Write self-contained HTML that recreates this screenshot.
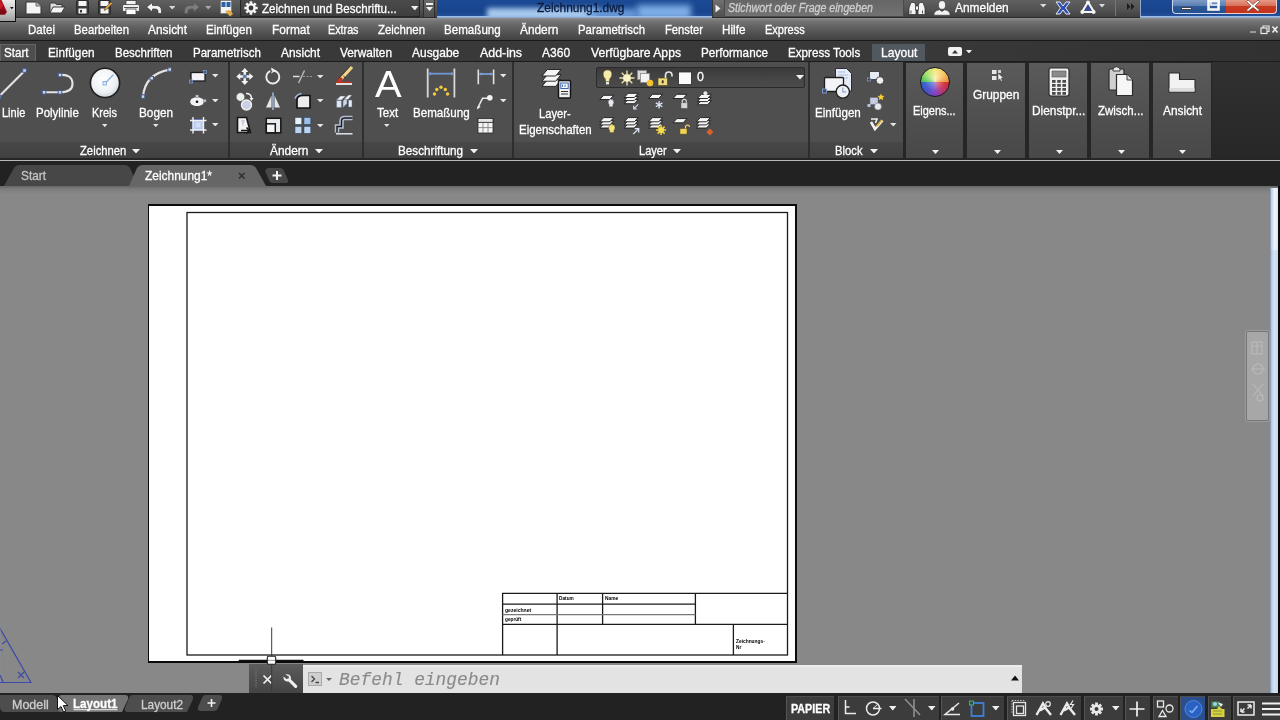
<!DOCTYPE html>
<html lang="de"><head><meta charset="utf-8"><title>Zeichnung1.dwg</title>
<style>
html,body{margin:0;padding:0;}
body{width:1280px;height:720px;overflow:hidden;position:relative;background:#888;font-family:'Liberation Sans', sans-serif;}
#app{position:absolute;left:0;top:0;width:1280px;height:720px;overflow:hidden;}
#app div,#app svg,#app span{position:absolute;}
.t{white-space:pre;transform-origin:0 50%;}
</style></head><body><div id="app">
<div style="left:0px;top:186px;width:1280px;height:508px;background:#888888;"></div>
<div style="left:0px;top:186px;width:1280px;height:8px;background:linear-gradient(#666,#7b7b7b 35%,#888);"></div>
<div style="left:1270px;top:188px;width:8px;height:505px;background:linear-gradient(90deg,#7d8fa6,#b9cfe8 22%,#d6e4f2 55%,#c2d6ec);"></div>
<div style="left:1271px;top:188px;width:7px;height:62px;background:linear-gradient(90deg,#b5cce6,#eef4fa 50%,#dbe7f4);"></div>
<div style="left:1278px;top:186px;width:2px;height:507px;background:#0a0a0a;"></div>
<div style="left:1245px;top:330px;width:25px;height:92px;background:#9a9a9a;border-radius:3px;"></div>
<div style="left:1246px;top:331px;width:23px;height:90px;background:#a7a7a7;border:1px solid #767676;box-sizing:border-box;border-radius:2px;"></div>
<svg style="left:1249px;top:336px" width="18" height="80" viewBox="0 0 18 80"><g fill="none" stroke="#bababa" stroke-width="1.1"><rect x="3" y="6" width="10" height="12"/><path d="M3 10h10M8 6v12"/><circle cx="9" cy="33" r="5"/><path d="M2 33h14"/><path d="M4 48l10 12M14 48L4 60"/><circle cx="11" cy="62" r="3"/></g></svg>
<div style="left:148px;top:204px;width:649px;height:459px;background:#ffffff;border:2px solid #0a0a0a;border-left-width:1.6px;box-sizing:border-box;"></div>
<svg style="left:0px;top:0px" width="1280" height="720" viewBox="0 0 1280 720"><g fill="none" stroke="#1a1a1a" stroke-width="1.3"><rect x="187" y="212.5" width="600.5" height="442.5"/><path d="M502.6 655V593.3H787.5"/><path d="M557.1 593.3V655M602.6 593.3V624.3M695.4 593.3V624.3M733.4 624.3V655M502.6 624.3H787.5M502.6 604.2H695.4"/></g><path d="M502.6 614.6H695.4" stroke="#777" stroke-width="1.2" fill="none"/></svg>
<svg style="left:0px;top:620px" width="40" height="70" viewBox="0 0 40 70"><g fill="none" stroke="#3d4ba8" stroke-width="1.2"><path d="M-2 5L31 62.5H-2"/><path d="M-2 62.5" /><path d="M0 8L0 62" stroke="#8a8f9e" stroke-width="0.8"/><path d="M2 24l4-3M0 30l3 0M18 52l6 6M24 52l-6 6M0 55l3 7"/></g></svg>
<div style="left:249px;top:664px;width:54px;height:29px;background:linear-gradient(#5c5c5c,#444);"></div>
<div style="left:303px;top:665px;width:719px;height:28px;background:#e3e3e3;"></div>
<div style="left:303px;top:665px;width:719px;height:2px;background:#ededed;"></div>
<svg style="left:252px;top:668px" width="10" height="22" viewBox="0 0 10 22"><path d="M4 2v18" stroke="#8a8a8a" stroke-width="1" stroke-dasharray="1 1.5"/></svg>
<svg style="left:262px;top:674px" width="11" height="11" viewBox="0 0 11 11"><path d="M1.5 1.5l8 8M9.5 1.5l-8 8" stroke="#f4f4f4" stroke-width="1.7" fill="none"/></svg>
<svg style="left:283px;top:672px" width="16" height="16" viewBox="0 0 16 16"><path d="M2.2 2.6a4 4 0 0 1 5.6 4.6l6 6a1.3 1.3 0 0 1-2.2 2.2l-6-6A4 4 0 0 1 .6 4.6L3.4 7 5.6 6.6 6 4.4Z" fill="#f0f0f0"/></svg>
<div style="left:308px;top:672px;width:14px;height:14px;background:#cfcfcf;border:1px solid #aaa;box-sizing:border-box;"></div>
<svg style="left:308px;top:672px" width="14" height="14" viewBox="0 0 14 14"><path d="M3.5 4l3 3-3 3M7.5 10.5h3.5" stroke="#444" stroke-width="1.3" fill="none"/></svg>
<svg style="left:325.5px;top:678.0px" width="6" height="3" viewBox="0 0 6 3"><path d="M0 0H6L3.0 3Z" fill="#666"/></svg>
<svg style="left:1011px;top:675px" width="8" height="6" viewBox="0 0 8 6"><path d="M0 5.5H8L4 0.5Z" fill="#111"/></svg>
<svg style="left:230px;top:620px" width="90" height="80" viewBox="0 0 90 80"><path d="M41.700 7.500V36M41.700 44V71" stroke="#3a3a3a" stroke-width="1" fill="none"/><path d="M8.700 40.400H73.500" stroke="#111" stroke-width="1.300" fill="none"/><rect x="37.300" y="36.300" width="8.400" height="8" rx="1.200" fill="#fff" stroke="#222" stroke-width="1.100"/><path d="M38 40.400H45" stroke="#888" stroke-width=".8"/></svg>
<div style="left:0px;top:693px;width:1280px;height:27px;background:#222222;"></div>
<div style="left:786px;top:696px;width:48px;height:24px;background:#3c3c3c;border-left:1px solid #555;border-top:1px solid #4c4c4c;box-sizing:border-box;"></div>
<div style="left:838px;top:696px;width:101px;height:24px;background:#3c3c3c;border-left:1px solid #555;border-top:1px solid #4c4c4c;box-sizing:border-box;"></div>
<div style="left:941px;top:696px;width:63px;height:24px;background:#3c3c3c;border-left:1px solid #555;border-top:1px solid #4c4c4c;box-sizing:border-box;"></div>
<div style="left:1007px;top:696px;width:74px;height:24px;background:#3c3c3c;border-left:1px solid #555;border-top:1px solid #4c4c4c;box-sizing:border-box;"></div>
<div style="left:1084px;top:696px;width:39px;height:24px;background:#3c3c3c;border-left:1px solid #555;border-top:1px solid #4c4c4c;box-sizing:border-box;"></div>
<div style="left:1125px;top:696px;width:25px;height:24px;background:#3c3c3c;border-left:1px solid #555;border-top:1px solid #4c4c4c;box-sizing:border-box;"></div>
<div style="left:1153px;top:696px;width:25px;height:24px;background:#3c3c3c;border-left:1px solid #555;border-top:1px solid #4c4c4c;box-sizing:border-box;"></div>
<div style="left:1180px;top:696px;width:25px;height:24px;background:#3c3c3c;border-left:1px solid #555;border-top:1px solid #4c4c4c;box-sizing:border-box;"></div>
<div style="left:1208px;top:696px;width:23px;height:24px;background:#3c3c3c;border-left:1px solid #555;border-top:1px solid #4c4c4c;box-sizing:border-box;"></div>
<div style="left:1233px;top:696px;width:47px;height:24px;background:#3c3c3c;border-left:1px solid #555;border-top:1px solid #4c4c4c;box-sizing:border-box;"></div>
<svg style="left:0px;top:694px" width="230" height="20" viewBox="0 0 230 20"><path d="M0 1H52Q56 1 57 5L60 18H4Q1 18 0 14Z" fill="#4d4d4d"/><path d="M132 1H190Q194 1 193 5L187 18H128Q124 18 125 14L129 4Q130 1 132 1Z" fill="#4d4d4d"/><path d="M62 1H125Q129 1 128 5L122 18H62Q58 18 58 14V5Q58 1 62 1Z" fill="#747474"/><path d="M206 1H219Q223 1 222 5L218 14Q217 17 213 17H201Q197 17 198 13L202 4Q203 1 206 1Z" fill="#4d4d4d"/><path d="M211.5 5v8M207.5 9h8" stroke="#f2f2f2" stroke-width="1.6"/><path d="M73.500 15.700H117.500" stroke="#ededed" stroke-width="1"/></svg>
<svg style="left:840px;top:696px" width="150" height="24" viewBox="0 0 150 24"><path d="M5.500 4V17.500H16M5.500 11H9.500" stroke="#eaeaea" stroke-width="1.500" fill="none"/><circle cx="33" cy="12.500" r="6.500" fill="none" stroke="#eaeaea" stroke-width="1.500"/><path d="M33 12.500H41.500" stroke="#eaeaea" stroke-width="1.500"/><path d="M33 12.500L38 8" stroke="#eaeaea" stroke-width="1"/><path d="M65 3L80 19M74 3V21" stroke="#8e8e8e" stroke-width="1.600" fill="none"/><path d="M120 18.500H105L119 7" stroke="#eaeaea" stroke-width="1.500" fill="none"/><circle cx="112.500" cy="13" r="1.800" fill="#eaeaea"/><rect x="131.500" y="7" width="12" height="13" fill="none" stroke="#3f7fdc" stroke-width="1.800"/><rect x="129.500" y="5" width="4" height="4" fill="#1e5a3c" stroke="#58c088" stroke-width=".8"/></svg>
<svg style="left:888.5px;top:706.2px" width="7.5" height="4.5" viewBox="0 0 7.5 4.5"><path d="M0 0H7.5L3.75 4.5Z" fill="#f0f0f0"/></svg>
<svg style="left:928.0px;top:706.2px" width="7.5" height="4.5" viewBox="0 0 7.5 4.5"><path d="M0 0H7.5L3.75 4.5Z" fill="#f0f0f0"/></svg>
<svg style="left:992.2px;top:706.2px" width="7.5" height="4.5" viewBox="0 0 7.5 4.5"><path d="M0 0H7.5L3.75 4.5Z" fill="#f0f0f0"/></svg>
<svg style="left:1112.2px;top:706.2px" width="7.5" height="4.5" viewBox="0 0 7.5 4.5"><path d="M0 0H7.5L3.75 4.5Z" fill="#f0f0f0"/></svg>
<svg style="left:1008px;top:696px" width="272" height="24" viewBox="0 0 272 24"><rect x="5.500" y="6.500" width="12" height="13" fill="none" stroke="#e6e6e6" stroke-width="1.300"/><rect x="8.500" y="10" width="7" height="7.500" fill="none" stroke="#e6e6e6" stroke-width="1.300"/><path d="M4 4.500H17.500M4 4.500V18" stroke="#bdbdbd" stroke-width="1" stroke-dasharray="1.500 1.200" fill="none"/><path d="M28.5 19L35.0 7.500L38.5 13.500M32.0 14.500L37.0 11.500M37.0 11.500L43.0 19" stroke="#ececec" stroke-width="2.400" fill="none"/><circle cx="40" cy="8" r="2.300" fill="none" stroke="#ececec" stroke-width="1.200"/><path d="M52.5 19L59.0 7.500L62.5 13.500M56.0 14.500L61.0 11.500M61.0 11.500L67.0 19" stroke="#ececec" stroke-width="2.400" fill="none"/><path d="M65 4.500l-2.500 4h3l-2.500 4" stroke="#ececec" stroke-width="1.200" fill="none"/><g transform="translate(88.500,13)"><g stroke="#e8e8e8" stroke-width="2.800"><path d="M0 -6.500V6.500M-6.500 0H6.500M-4.600 -4.600L4.600 4.600M4.600 -4.600L-4.600 4.600"/></g><circle r="4.600" fill="#e8e8e8"/><circle r="2" fill="#3c3c3c"/></g><path d="M129 5.500V20.500M121.500 13H136.500" stroke="#f0f0f0" stroke-width="1.700"/><rect x="149.500" y="5" width="6" height="6" fill="none" stroke="#eaeaea" stroke-width="1.300"/><circle cx="161.500" cy="12.500" r="3.500" fill="none" stroke="#eaeaea" stroke-width="1.300"/><path d="M151 20.500l3.500-6 3.500 6Z" fill="none" stroke="#eaeaea" stroke-width="1.300"/><rect x="173" y="1" width="24" height="23" fill="#2a4f8c"/><circle cx="185.500" cy="13" r="8.500" fill="#2a62c4" stroke="#4f86e0" stroke-width="1"/><path d="M181.500 14.500L184 16.500L189.500 10" stroke="#7fb0f4" stroke-width="1.600" fill="none"/><rect x="203.500" y="5.500" width="8" height="6" fill="#4c8a5c"/><path d="M203 13h6l2-3 3 3h2.500v8H203Z" fill="#d8d040"/><circle cx="207" cy="8" r="2" fill="#9fd0f0"/><path d="M210 6.500l5 1.500-2 3Z" fill="#f2f2f2"/><path d="M205 15h9M205 18h9" stroke="#7c9a3c" stroke-width="1"/><rect x="230" y="6" width="16" height="13" fill="none" stroke="#ececec" stroke-width="1.500"/><path d="M233 16l3.500-3.500M233 16v-3.500M233 16h3.500M243 9l-3.500 3.500M243 9v3.500M243 9h-3.500" stroke="#ececec" stroke-width="1.500" fill="none"/><path d="M254 7.500H272M254 13H272M254 18.500H272" stroke="#f0f0f0" stroke-width="2"/></svg>
<div style="left:0px;top:0px;width:1280px;height:18px;background:linear-gradient(#606060,#525252 55%,#3e3e3e);"></div>
<div style="left:0px;top:17px;width:1280px;height:1px;background:#2c2c2c;"></div>
<div style="left:0px;top:18px;width:1280px;height:23px;background:linear-gradient(#8e8e8e,#767676 12%,#646464 35%,#525252 65%,#404040);"></div>
<div style="left:0px;top:40px;width:1280px;height:1px;background:#191919;"></div>
<div style="left:0px;top:41px;width:1280px;height:21px;background:linear-gradient(90deg,#393939 70%,#313131);"></div>
<div style="left:0px;top:44px;width:36px;height:17px;background:#4e4e4e;border:1px solid #656565;border-bottom:none;box-sizing:border-box;"></div>
<div style="left:872px;top:44px;width:53px;height:17px;background:#525860;"></div>
<div style="left:0px;top:61px;width:1280px;height:1px;background:#1c1c1c;"></div>
<div style="left:948px;top:47px;width:14px;height:9px;background:#f2f2f2;border-radius:2px;"></div>
<svg style="left:948px;top:47px" width="14" height="9" viewBox="0 0 14 9"><path d="M4 6.5h6L7 3Z" fill="#333"/></svg>
<svg style="left:966.0px;top:49.8px" width="6" height="3.5" viewBox="0 0 6 3.5"><path d="M0 0H6L3.0 3.5Z" fill="#f0f0f0"/></svg>
<div style="left:0px;top:62px;width:1280px;height:97px;background:#262626;"></div>
<div style="left:1212px;top:62px;width:68px;height:96px;background:linear-gradient(#313131,#272727);"></div>
<div style="left:0px;top:62px;width:228px;height:96px;background:#4f4f4f;"></div>
<div style="left:0px;top:142px;width:228px;height:16px;background:linear-gradient(#474747,#414141);"></div>
<div style="left:229.5px;top:62px;width:132.5px;height:96px;background:#4f4f4f;"></div>
<div style="left:229.5px;top:142px;width:132.5px;height:16px;background:linear-gradient(#474747,#414141);"></div>
<div style="left:363.5px;top:62px;width:148.5px;height:96px;background:#4f4f4f;"></div>
<div style="left:363.5px;top:142px;width:148.5px;height:16px;background:linear-gradient(#474747,#414141);"></div>
<div style="left:513.5px;top:62px;width:294.5px;height:96px;background:#4f4f4f;"></div>
<div style="left:513.5px;top:142px;width:294.5px;height:16px;background:linear-gradient(#474747,#414141);"></div>
<div style="left:809.5px;top:62px;width:93.5px;height:96px;background:#4f4f4f;"></div>
<div style="left:809.5px;top:142px;width:93.5px;height:16px;background:linear-gradient(#474747,#414141);"></div>
<div style="left:228px;top:62px;width:1.5px;height:96px;background:#2e2e2e;"></div>
<div style="left:362px;top:62px;width:1.5px;height:96px;background:#2e2e2e;"></div>
<div style="left:512px;top:62px;width:1.5px;height:96px;background:#2e2e2e;"></div>
<div style="left:808px;top:62px;width:1.5px;height:96px;background:#2e2e2e;"></div>
<div style="left:906px;top:63px;width:57px;height:95px;background:linear-gradient(#5a5a5a,#515151 50%,#484848);"></div>
<div style="left:967px;top:63px;width:58px;height:95px;background:linear-gradient(#5a5a5a,#515151 50%,#484848);"></div>
<div style="left:1029px;top:63px;width:58px;height:95px;background:linear-gradient(#5a5a5a,#515151 50%,#484848);"></div>
<div style="left:1091px;top:63px;width:58px;height:95px;background:linear-gradient(#5a5a5a,#515151 50%,#484848);"></div>
<div style="left:1153px;top:63px;width:58px;height:95px;background:linear-gradient(#5a5a5a,#515151 50%,#484848);"></div>
<div style="left:0px;top:158px;width:1280px;height:2px;background:#262626;"></div>
<div style="left:0px;top:160px;width:1280px;height:1px;background:#b8b8b8;"></div>
<div style="left:0px;top:161px;width:1280px;height:25px;background:#222222;"></div>
<svg style="left:0px;top:164px" width="300" height="23" viewBox="0 0 300 23"><path d="M4 22L14 4Q16 1 20 1H124Q128 1 130 4L138 22Z" fill="#474747"/><path d="M129 22L137 4Q139 1 143 1H250Q254 1 256 4L266 22Z" fill="#666"/><path d="M265 7Q266 4 269 4H280Q283 4 284 7L288 16Q289 19 286 19H273Q270 19 269 16Z" fill="#474747"/><path d="M277 7v9M272.500 11.500h9" stroke="#f2f2f2" stroke-width="2"/><path d="M239 9l5.500 5.500M244.500 9l-5.500 5.500" stroke="#303030" stroke-width="1.600"/></svg>
<div style="left:0px;top:0px;width:16px;height:22px;background:linear-gradient(#ececec,#cfcfcf 45%,#9d9d9d);border-right:1px solid #0c0c0c;border-bottom:1px solid #0c0c0c;box-sizing:border-box;"></div>
<svg style="left:0px;top:0px" width="15" height="21" viewBox="0 0 15 21"><path d="M0 0H1.500L7 12 5 14.5H0Z" fill="#a30e1b"/><path d="M0 0L3 6 0 9Z" fill="#c81c28"/><path d="M0 10L4 9 6 12.500 4.500 14.500H0Z" fill="#7c0a14"/><path d="M10 7h3.600l-1.800 2.300Z" fill="#111"/></svg>
<svg style="left:25px;top:0.5px" width="17" height="14" viewBox="0 0 17 14"><path d="M1 1H11L16 5V13H1Z" fill="#f4f4f4" stroke="#333" stroke-width="1"/><path d="M11 1V5H16" fill="#bbb" stroke="#555" stroke-width=".8"/></svg>
<svg style="left:49px;top:1px" width="17" height="14" viewBox="0 0 17 14"><path d="M1 12V3Q1 2 2 2H6L7.500 3.500H13V6" fill="#ddd" stroke="#3a3a3a" stroke-width="1"/><path d="M1 12L4 6H16L12.500 12Z" fill="#f4f4f4" stroke="#3a3a3a" stroke-width="1"/></svg>
<svg style="left:76px;top:0px" width="13" height="15" viewBox="0 0 13 15"><rect x=".5" y=".5" width="12" height="14" rx="1" fill="#3a3a3a" stroke="#2a2a2a"/><rect x="2.500" y="1" width="8" height="5" fill="#f4f4f4"/><rect x="2.500" y="8.500" width="8" height="5" fill="#f4f4f4"/><rect x="4" y="10" width="2" height="2.500" fill="#333"/></svg>
<svg style="left:98px;top:0px" width="15" height="15" viewBox="0 0 15 15"><rect x=".5" y=".5" width="12" height="14" rx="1" fill="#3a3a3a" stroke="#2a2a2a"/><rect x="2.500" y="1" width="8" height="5" fill="#f4f4f4"/><rect x="2.500" y="8.500" width="8" height="5" fill="#f4f4f4"/><path d="M7 8l6-6 1.500 1.500-6 6-2.500 1Z" fill="#e8a33a" stroke="#444" stroke-width=".6"/></svg>
<svg style="left:122px;top:0px" width="18" height="15" viewBox="0 0 18 15"><rect x="4" y=".5" width="10" height="5" fill="#f4f4f4" stroke="#444" stroke-width=".8"/><rect x=".5" y="4.500" width="17" height="7" rx="1.500" fill="#f0f0f0" stroke="#444" stroke-width=".8"/><rect x="4" y="9" width="10" height="5.500" fill="#fff" stroke="#444" stroke-width=".8"/><path d="M2 7.500h14" stroke="#555" stroke-width="1"/></svg>
<svg style="left:146px;top:2px" width="16" height="12" viewBox="0 0 16 12"><path d="M.5 5L6.500 .5V3.500H10Q15.500 3.500 15.500 9V11.500H12V9.500Q12 7 9.500 7H6.500V10Z" fill="#f4f4f4" stroke="#333" stroke-width=".7"/></svg>
<svg style="left:168.8px;top:6.2px" width="6.5" height="3.5" viewBox="0 0 6.5 3.5"><path d="M0 0H6.5L3.25 3.5Z" fill="#d8d8d8"/></svg>
<svg style="left:184px;top:2px" width="16" height="12" viewBox="0 0 16 12"><path d="M15.500 5L9.500 .5V3.500H6Q.5 3.500 .5 9V11.500H4V9.500Q4 7 6.500 7H9.500V10Z" fill="#7d7d7d" stroke="#555" stroke-width=".7"/></svg>
<svg style="left:205.2px;top:6.2px" width="6.5" height="3.5" viewBox="0 0 6.5 3.5"><path d="M0 0H6.5L3.25 3.5Z" fill="#a8a8a8"/></svg>
<svg style="left:220px;top:0px" width="14" height="17" viewBox="0 0 14 17"><rect x=".5" y=".5" width="11" height="13" fill="#f2f2f2" stroke="#666" stroke-width=".6"/><rect x="1.500" y="2" width="4" height="5" fill="#2c5fa8"/><rect x="6.500" y="2" width="4" height="5" fill="#2c5fa8"/><path d="M5 11l5-1 3 4-3 2.500Z" fill="#e0a94a"/></svg>
<div style="left:240px;top:0px;width:180px;height:17px;background:linear-gradient(#4b4b4b,#3e3e3e);border:1px solid #262626;border-top:none;box-sizing:border-box;"></div>
<svg style="left:244px;top:1px" width="14" height="14" viewBox="0 0 14 14"><g fill="#f4f4f4"><circle cx="7" cy="7" r="4.800"/><g stroke="#f4f4f4" stroke-width="2.600"><path d="M7 .3V13.700M.3 7H13.700M2.300 2.300l9.400 9.400M11.700 2.300l-9.400 9.400"/></g></g><circle cx="7" cy="7" r="2.400" fill="#383838"/></svg>
<svg style="left:411.2px;top:5.8px" width="7.5" height="4.5" viewBox="0 0 7.5 4.5"><path d="M0 0H7.5L3.75 4.5Z" fill="#f0f0f0"/></svg>
<div style="left:423px;top:0px;width:12px;height:17px;background:linear-gradient(#6a6a6a,#4c4c4c);border-left:1px solid #2e2e2e;border-right:1px solid #2e2e2e;box-sizing:border-box;"></div>
<div style="left:425.5px;top:3px;width:7px;height:1.5px;background:#f0f0f0;"></div>
<svg style="left:425.5px;top:6.5px" width="7" height="4" viewBox="0 0 7 4"><path d="M0 0H7L3.5 4Z" fill="#f0f0f0"/></svg>
<div style="left:437px;top:0px;width:275px;height:17px;background:linear-gradient(#1b4a94,#18448c 70%,#26549e);"></div>
<div style="left:437px;top:0;width:275px;height:17px;overflow:hidden"><div style="left:50px;top:8px;width:110px;height:12px;background:#a6c8ee;filter:blur(2.5px)"></div><div style="left:150px;top:9px;width:50px;height:10px;background:#6d9fdc;filter:blur(3px)"></div><div style="left:200px;top:5px;width:54px;height:14px;background:#7eaee6;filter:blur(3px)"></div></div>
<div style="left:437px;top:16px;width:275px;height:2px;background:linear-gradient(#a9c4e4,#7ea3d2);"></div>
<div style="left:712px;top:0px;width:12px;height:17px;background:linear-gradient(#707070,#505050);border-left:1px solid #333;box-sizing:border-box;"></div>
<svg style="left:715px;top:4px" width="6" height="9" viewBox="0 0 6 9"><path d="M.5 .5L5.500 4.500 .5 8.500Z" fill="#f0f0f0"/></svg>
<div style="left:724px;top:0px;width:180px;height:17px;background:linear-gradient(#666,#727272);border:1px solid #4a4a4a;border-top:none;box-sizing:border-box;"></div>
<svg style="left:908px;top:1px" width="18" height="15" viewBox="0 0 18 15"><g fill="#f4f4f4" stroke="#2a2a2a" stroke-width=".7"><path d="M1 13.500V7L3 1.500H6.500L8 5V13.500Z"/><path d="M10 13.500V5L11.500 1.500H15L17 7V13.500Z"/><rect x="7.500" y="5" width="3" height="4"/></g><path d="M3 9.500v3M14.500 9.500v3" stroke="#555"/></svg>
<svg style="left:933px;top:0px" width="18" height="16" viewBox="0 0 18 16"><g fill="#f2f2f2" stroke="#333" stroke-width=".6"><ellipse cx="9" cy="5" rx="3.600" ry="4.300"/><path d="M.8 15.200Q1 10.500 6.500 9.800L9 11.500 11.500 9.800Q17 10.500 17.200 15.200Z"/></g></svg>
<svg style="left:1040.2px;top:4.2px" width="6.5" height="3.5" viewBox="0 0 6.5 3.5"><path d="M0 0H6.5L3.25 3.5Z" fill="#dcdcdc"/></svg>
<svg style="left:1055px;top:1px" width="16" height="14" viewBox="0 0 16 14"><path d="M1 1H5L8 5 11 1H15L10.500 7 15 13H11L8 9 5 13H1L5.500 7Z" fill="#2d4fb5" stroke="#e8ecf8" stroke-width="1"/></svg>
<svg style="left:1080px;top:0px" width="16" height="14" viewBox="0 0 16 14"><path d="M8 2L14 12H2Z" fill="none" stroke="#f4f4f4" stroke-width="2.200" stroke-linejoin="round"/><circle cx="8" cy="2.500" r="1.900" fill="#f4f4f4"/><circle cx="2.300" cy="12" r="1.900" fill="#f4f4f4"/><circle cx="13.700" cy="12" r="1.900" fill="#f4f4f4"/><path d="M8 4.500L11.500 10.500H4.500Z" fill="#3548a0"/></svg>
<svg style="left:1099.0px;top:4.2px" width="6" height="3.5" viewBox="0 0 6 3.5"><path d="M0 0H6L3.0 3.5Z" fill="#dcdcdc"/></svg>
<div style="left:1115px;top:0px;width:1px;height:16px;background:#777;"></div>
<svg style="left:1127px;top:3px" width="8" height="7" viewBox="0 0 8 7"><path d="M0 0L3.500 3.500 0 7ZM4 0L7.500 3.500 4 7Z" fill="#1e1e1e"/></svg>
<div style="left:1140px;top:0px;width:140px;height:17px;background:linear-gradient(#1b4a94,#18448c 70%,#26549e);border-left:1px solid #8fa8cc;box-sizing:border-box;"></div>
<div style="left:1140px;top:16px;width:140px;height:2px;background:linear-gradient(#a9c4e4,#7ea3d2);"></div>
<div style="left:1172px;top:0px;width:30px;height:14px;background:linear-gradient(#7d9cc6,#5a7fb4 45%,#2f5a9a 50%,#24508f);border:1px solid #c9d8ec;border-top:none;box-sizing:border-box;border-radius:0 0 0 4px;"></div>
<div style="left:1201px;top:0px;width:26px;height:14px;background:linear-gradient(#7d9cc6,#5a7fb4 45%,#2f5a9a 50%,#24508f);border:1px solid #c9d8ec;border-top:none;border-left:none;box-sizing:border-box;"></div>
<div style="left:1226px;top:0px;width:51px;height:14px;background:linear-gradient(#e59a88,#d8705a 45%,#c93a22 50%,#c4321c);border:1px solid #ecd0c8;border-top:none;border-left:none;box-sizing:border-box;border-radius:0 0 4px 0;"></div>
<div style="left:1181px;top:7px;width:11px;height:3px;background:#f6f6f6;border:0.5px solid #444;box-sizing:border-box;"></div>
<svg style="left:1207px;top:0px" width="14" height="11" viewBox="0 0 14 11"><rect x="1.500" y="1" width="10" height="8.500" fill="none" stroke="#f6f6f6" stroke-width="2.600"/><rect x="4" y="-1" width="8" height="6" fill="none" stroke="#f6f6f6" stroke-width="1.500"/></svg>
<svg style="left:1246px;top:0px" width="14" height="12" viewBox="0 0 14 12"><path d="M2 0L7 4.500 12 0 13.500 1.500 9 6 13.500 10 12 11.500 7 7.500 2 11.500 .5 10 5 6 .5 1.500Z" fill="#f8f8f8" stroke="#5a2a22" stroke-width=".6"/></svg>
<svg style="left:1248px;top:24px" width="32" height="12" viewBox="0 0 32 12"><path d="M2 8h6" stroke="#bdbdbd" stroke-width="1.300"/><rect x="13" y="4" width="6" height="5.500" fill="none" stroke="#e8e8e8" stroke-width="1.200"/><path d="M15 4V2h6v5.500h-2" fill="none" stroke="#e8e8e8" stroke-width="1.200"/><path d="M24.500 2.500l5 6M29.500 2.500l-5 6" stroke="#f2f2f2" stroke-width="1.500"/></svg>
<svg style="left:0px;top:0px" width="240" height="160" viewBox="0 0 240 160"><path d="M-1 96.600L24.500 71" stroke="#e2e2e2" stroke-width="2.100" fill="none"/><rect x="22.7" y="68.7" width="3.6" height="3.6" fill="#cdd5e3" stroke="#42598f" stroke-width="1"/><rect x="-2.8" y="95.2" width="3.6" height="3.6" fill="#cdd5e3" stroke="#42598f" stroke-width="1"/><path d="M44 92.300H60M60 75Q72.500 74 72.500 84Q72.500 92.300 60 92.300" stroke="#e4e4e4" stroke-width="2.100" fill="none"/><rect x="42.2" y="90.5" width="3.6" height="3.6" fill="#cdd5e3" stroke="#42598f" stroke-width="1"/><rect x="58.2" y="90.5" width="3.6" height="3.6" fill="#cdd5e3" stroke="#42598f" stroke-width="1"/><rect x="58.2" y="73.2" width="3.6" height="3.6" fill="#cdd5e3" stroke="#42598f" stroke-width="1"/><defs><radialGradient id="gc" cx="45%" cy="40%" r="60%"><stop offset="0" stop-color="#ffffff"/><stop offset=".7" stop-color="#eef1f4"/><stop offset="1" stop-color="#cfd6dd"/></radialGradient></defs><circle cx="105" cy="82.900" r="14.600" fill="url(#gc)" stroke="#1e1e1e" stroke-width="1.600"/><path d="M105 83.500L113.500 74.500" stroke="#8fb4e0" stroke-width="1.300"/><rect x="103" y="81.500" width="3.500" height="3.500" fill="#dfe9f5" stroke="#7aa2d6" stroke-width=".8"/><path d="M143 96.600Q145 74 169.700 69.600" stroke="#e4e4e4" stroke-width="2.100" fill="none"/><rect x="141.2" y="94.8" width="3.6" height="3.6" fill="#cdd5e3" stroke="#42598f" stroke-width="1"/><rect x="149.89999999999998" y="76.4" width="3.6" height="3.6" fill="#cdd5e3" stroke="#42598f" stroke-width="1"/><rect x="167.89999999999998" y="67.7" width="3.6" height="3.6" fill="#cdd5e3" stroke="#42598f" stroke-width="1"/><rect x="191" y="72.500" width="14" height="8.500" fill="#f4f4f8" stroke="#1c1c1c" stroke-width="1.300"/><rect x="203.500" y="70.500" width="3" height="3" fill="#555" stroke="#6f98d8" stroke-width=".8"/><rect x="189.500" y="80" width="3" height="3" fill="#555" stroke="#6f98d8" stroke-width=".8"/><ellipse cx="197" cy="101.700" rx="7.300" ry="4.900" fill="#f4f4f4" stroke="#3a3a3a" stroke-width=".8"/><circle cx="197" cy="101.700" r="1.300" fill="#111"/><rect x="203.500" y="99.500" width="2.500" height="2.500" fill="#ccd" stroke="#889" stroke-width=".5"/><rect x="195.800" y="95" width="2.500" height="2.500" fill="#ccd" stroke="#889" stroke-width=".5"/><rect x="192.500" y="119.500" width="11" height="11" fill="#b9c9ea" stroke="#3b57a8" stroke-width="1"/><path d="M190 120.500H206.500M190 130H206.500M193 117V133.500M203.500 117V133.500" stroke="#f0f0f0" stroke-width="1.400"/><rect x="195.500" y="122.500" width="5" height="5" fill="#d5def2"/></svg>
<svg style="left:211.9px;top:74.2px" width="6.5" height="3.5" viewBox="0 0 6.5 3.5"><path d="M0 0H6.5L3.25 3.5Z" fill="#e6e6e6"/></svg>
<svg style="left:211.9px;top:98.8px" width="6.5" height="3.5" viewBox="0 0 6.5 3.5"><path d="M0 0H6.5L3.25 3.5Z" fill="#e6e6e6"/></svg>
<svg style="left:211.9px;top:122.8px" width="6.5" height="3.5" viewBox="0 0 6.5 3.5"><path d="M0 0H6.5L3.25 3.5Z" fill="#e6e6e6"/></svg>
<svg style="left:101.8px;top:123.7px" width="5.5" height="3.2" viewBox="0 0 5.5 3.2"><path d="M0 0H5.5L2.75 3.2Z" fill="#e6e6e6"/></svg>
<svg style="left:153.2px;top:123.7px" width="5.5" height="3.2" viewBox="0 0 5.5 3.2"><path d="M0 0H5.5L2.75 3.2Z" fill="#e6e6e6"/></svg>
<svg style="left:384.2px;top:123.8px" width="5.5" height="3" viewBox="0 0 5.5 3"><path d="M0 0H5.5L2.75 3Z" fill="#e6e6e6"/></svg>
<svg style="left:132.0px;top:148.8px" width="8" height="4.5" viewBox="0 0 8 4.5"><path d="M0 0H8L4.0 4.5Z" fill="#f2f2f2"/></svg>
<svg style="left:315.0px;top:148.8px" width="8" height="4.5" viewBox="0 0 8 4.5"><path d="M0 0H8L4.0 4.5Z" fill="#f2f2f2"/></svg>
<svg style="left:470.0px;top:148.8px" width="8" height="4.5" viewBox="0 0 8 4.5"><path d="M0 0H8L4.0 4.5Z" fill="#f2f2f2"/></svg>
<svg style="left:673.0px;top:148.8px" width="8" height="4.5" viewBox="0 0 8 4.5"><path d="M0 0H8L4.0 4.5Z" fill="#f2f2f2"/></svg>
<svg style="left:869.5px;top:148.8px" width="8" height="4.5" viewBox="0 0 8 4.5"><path d="M0 0H8L4.0 4.5Z" fill="#f2f2f2"/></svg>
<svg style="left:931.5px;top:150.0px" width="7" height="4" viewBox="0 0 7 4"><path d="M0 0H7L3.5 4Z" fill="#f2f2f2"/></svg>
<svg style="left:993.5px;top:150.0px" width="7" height="4" viewBox="0 0 7 4"><path d="M0 0H7L3.5 4Z" fill="#f2f2f2"/></svg>
<svg style="left:1055.9px;top:150.0px" width="7" height="4" viewBox="0 0 7 4"><path d="M0 0H7L3.5 4Z" fill="#f2f2f2"/></svg>
<svg style="left:1117.5px;top:150.0px" width="7" height="4" viewBox="0 0 7 4"><path d="M0 0H7L3.5 4Z" fill="#f2f2f2"/></svg>
<svg style="left:1178.8px;top:150.0px" width="7" height="4" viewBox="0 0 7 4"><path d="M0 0H7L3.5 4Z" fill="#f2f2f2"/></svg>
<svg style="left:317.1px;top:74.5px" width="6.5" height="3.5" viewBox="0 0 6.5 3.5"><path d="M0 0H6.5L3.25 3.5Z" fill="#e6e6e6"/></svg>
<svg style="left:317.1px;top:98.5px" width="6.5" height="3.5" viewBox="0 0 6.5 3.5"><path d="M0 0H6.5L3.25 3.5Z" fill="#e6e6e6"/></svg>
<svg style="left:317.1px;top:123.5px" width="6.5" height="3.5" viewBox="0 0 6.5 3.5"><path d="M0 0H6.5L3.25 3.5Z" fill="#e6e6e6"/></svg>
<svg style="left:499.6px;top:74.2px" width="6.5" height="3.5" viewBox="0 0 6.5 3.5"><path d="M0 0H6.5L3.25 3.5Z" fill="#e6e6e6"/></svg>
<svg style="left:499.6px;top:98.5px" width="6.5" height="3.5" viewBox="0 0 6.5 3.5"><path d="M0 0H6.5L3.25 3.5Z" fill="#e6e6e6"/></svg>
<svg style="left:890.1px;top:123.0px" width="6.5" height="3.5" viewBox="0 0 6.5 3.5"><path d="M0 0H6.5L3.25 3.5Z" fill="#e6e6e6"/></svg>
<svg style="left:232px;top:64px" width="122" height="74" viewBox="0 0 122 74"><g transform="translate(12.800,12.500)"><path d="M0 -8.500L3.600 -4.500H1.300V-1.300H4.500V-3.600L8.500 0 4.500 3.600V1.300H1.300V4.500H3.600L0 8.500 -3.600 4.500H-1.300V1.300H-4.500V3.600L-8.500 0 -4.500 -3.600V-1.300H-1.300V-4.500H-3.600Z" fill="#f4f4f4"/><circle r="2" fill="#5f7fb8"/></g><g transform="translate(40.800,13)"><circle r="6.500" fill="none" stroke="#eeeeee" stroke-width="1.900"/><path d="M-1.500 -9.500L3 -6.500 -1.500 -3.500Z" fill="#eeeeee"/><path d="M-3 -7.800L-1 -4.800" stroke="#525252" stroke-width="1.500"/></g><path d="M61 12.500H67.500" stroke="#e0e0e0" stroke-width="1.500"/><path d="M71 12.500H81" stroke="#9a9a9a" stroke-width="1" stroke-dasharray="2 1.500"/><path d="M72.500 6.500L66.500 19" stroke="#b8b8b8" stroke-width="1.500"/><path d="M104 20H120" stroke="#f2f2f2" stroke-width="1.800"/><path d="M104 18.300H120" stroke="#c8301c" stroke-width="1.200"/><path d="M108.500 15.500L120 3" stroke="#f3d58a" stroke-width="3.200"/><path d="M108.500 15.500L120 3" stroke="#3a2a18" stroke-width=".6" transform="translate(-1.600,-1.300)"/><path d="M106 18L109.800 14" stroke="#c8301c" stroke-width="3.200"/><path d="M111.500 12.200l2.200 2" stroke="#333" stroke-width="1"/><circle cx="8.500" cy="33" r="4.300" fill="#e9efe9" stroke="#555" stroke-width=".6"/><circle cx="14.500" cy="41" r="5" fill="#c9cfe6" stroke="#f2f2f2" stroke-width="1.400"/><path d="M14 29.500Q19.500 29.500 19.500 34.500" fill="none" stroke="#f0f0f0" stroke-width="1.500"/><path d="M17.500 34l2 3 2-3Z" fill="#f0f0f0"/><path d="M39.500 31.500V43.500H34Z" fill="#e8e8e8"/><path d="M42.500 31.500V43.500H48Z" fill="#dfe4ec"/><path d="M41 28.500V46" stroke="#a9c0e4" stroke-width="1.400"/><path d="M65 44V36Q65 31.500 71 31.500H78V44Z" fill="#ececec" stroke="#151515" stroke-width="1.700"/><path d="M63 34.500Q64.500 30.500 69.500 29.500" stroke="#9fb6de" stroke-width="1.600" fill="none"/><g stroke="#5a6a86" stroke-width=".5"><path d="M104.500 36l4-4h5l-4 4Z" fill="#f4f4f4"/><path d="M104.500 36.500h5v7h-5Z" fill="#dfe6f0"/><path d="M111 37l4-4.500v7l-4 4Z" fill="#cfd8e6"/><path d="M112 35.500l4.500-4.500h3.500l-4 4.500Z" fill="#f4f4f4"/><path d="M116.500 36h3.500v7h-3.500Z" fill="#e8eef6"/></g><path d="M5.500 53.500H14.500L18.500 68.500H5.500Z" fill="#f2f2f2" stroke="#161616" stroke-width="1.600"/><path d="M9 56L11 63L13 56" fill="#c9cfdc"/><path d="M9 66.500H17M14.500 63.500L17.500 66.500 14.500 69.500" stroke="#161616" stroke-width="1.600" fill="none"/><rect x="34.300" y="54.300" width="14.500" height="14.500" fill="#e8ebf2" stroke="#161616" stroke-width="1.500"/><rect x="34.300" y="59.800" width="9" height="9" fill="#f6f6f6" stroke="#161616" stroke-width="1.500"/><g fill="#bcd4ee" stroke="#26415f" stroke-width=".5"><rect x="63" y="53.500" width="6.800" height="6.800" fill="#e8f0fa"/><rect x="72" y="53.500" width="6.800" height="6.800" fill="#9fc0e6"/><rect x="63" y="62.500" width="6.800" height="6.800"/><rect x="72" y="62.500" width="6.800" height="6.800"/></g><path d="M105 68.500V62.500H109.500V57Q109.500 54 113 54H120.500" fill="none" stroke="#b5bfd4" stroke-width="4.500"/><path d="M105 68.500V62.500H109.500V57Q109.500 54 113 54H120.500" fill="none" stroke="#1a1a1a" stroke-width="1.400"/><path d="M104 69.800H120.500" stroke="#dfe3ec" stroke-width="1.500"/></svg>
<svg style="left:420px;top:64px" width="90" height="74" viewBox="0 0 90 74"><path d="M7.700 4.500V33.500M34.400 4.500V33.500" stroke="#d8d8d8" stroke-width="1.800"/><path d="M9 9.700H33" stroke="#6f97d6" stroke-width="1.800"/><path d="M8.200 9.700l2.800-1.900v3.800ZM33.900 9.700l-2.800-1.900v3.800Z" fill="#6f97d6"/><circle cx="14.5" cy="30" r="1.700" fill="#f2cc3a"/><circle cx="16.8" cy="25.5" r="1.700" fill="#f2cc3a"/><circle cx="21" cy="23.2" r="1.700" fill="#f2cc3a"/><circle cx="25.3" cy="25.5" r="1.700" fill="#f2cc3a"/><circle cx="27.6" cy="30" r="1.700" fill="#f2cc3a"/><path d="M58.300 5.500V20.300M73.600 5.500V20.300" stroke="#e2e2e2" stroke-width="1.600"/><path d="M59.500 10H72.500" stroke="#7d9fdc" stroke-width="1.700"/><path d="M59 10l2.500-1.800v3.600ZM73 10l-2.500-1.800v3.600Z" fill="#7d9fdc"/><path d="M57.500 44.500L62.500 34.300H68.500" stroke="#e8e8e8" stroke-width="1.500" fill="none"/><circle cx="69.800" cy="33.700" r="2.800" fill="#f4f4f4"/><path d="M57 45.500l1-4 2.800 1.300Z" fill="#e8e8e8"/><rect x="58" y="54.500" width="15" height="14.500" fill="#f4f4f4" stroke="#2a2a2a" stroke-width=".8"/><path d="M58 58.500H73M58 63.600H73M63 58.500V69M68 58.500V69" stroke="#777" stroke-width=".8"/><rect x="58" y="54.500" width="15" height="3.800" fill="#e4e4e4" stroke="#2a2a2a" stroke-width=".8"/></svg>
<svg style="left:536px;top:64px" width="40" height="40" viewBox="0 0 40 40"><path d="M11.3 15.9H25L19.7 22.4H6Z" fill="#f6f6f6" stroke="#1a1a1a" stroke-width=".9"/><path d="M11.3 10.7H25L19.7 17.2H6Z" fill="#f6f6f6" stroke="#1a1a1a" stroke-width=".9"/><path d="M11.3 5.5H25L19.7 12.0H6Z" fill="#f6f6f6" stroke="#1a1a1a" stroke-width=".9"/><rect x="22.500" y="16.500" width="12" height="17.500" rx="1" fill="#f0f0f0" stroke="#161616" stroke-width="1.500"/><rect x="24.800" y="19" width="7.400" height="5.500" fill="#fafafa" stroke="#3c66b0" stroke-width="1"/><path d="M26.500 20.500v2.500M29 20.500v2.500" stroke="#3c66b0" stroke-width=".9"/><path d="M25 27.500h7M25 30h7" stroke="#333" stroke-width="1"/></svg>
<div style="left:596px;top:67px;width:209px;height:21px;background:linear-gradient(#3b3b3b,#444 50%,#4b4b4b);border:1px solid #2a2a2a;box-sizing:border-box;border-radius:2px;"></div>
<svg style="left:598px;top:66px" width="100" height="24" viewBox="0 0 100 24"><path d="M9.500 4Q13.800 4 13.800 8.300Q13.800 10.800 11.800 12.800L11.300 15.500H7.700L7.200 12.800Q5.200 10.800 5.200 8.300Q5.200 4 9.500 4Z" fill="#f7e9a8" stroke="#5a5030" stroke-width=".5"/><rect x="8" y="15.800" width="3" height="2.600" fill="#e8e8e8"/><g transform="translate(29,12)"><circle r="3.800" fill="#f6efb8"/><g stroke="#e9e2a4" stroke-width="1.400"><path d="M0 -7.500V7.500M-7.500 0H7.500M-5.300 -5.300L5.300 5.300M5.300 -5.300L-5.300 5.300"/></g><circle r="3.600" fill="#f8f3c8"/></g><rect x="39.500" y="4.500" width="9" height="9" fill="#d9d9d9" stroke="#8a8a8a" stroke-width=".8"/><rect x="42.500" y="7.500" width="9" height="9" fill="#f4f4f4" stroke="#8a8a8a" stroke-width=".8"/><circle cx="52" cy="17" r="3.300" fill="#f2c230"/><rect x="60" y="12" width="9.500" height="7.500" fill="#f0dc7c" stroke="#54481c" stroke-width=".7"/><rect x="63.800" y="14.300" width="1.800" height="3" fill="#333"/><path d="M67.500 12V9.500Q67.500 6 70.800 6Q74 6 74 9.500V10.500" fill="none" stroke="#e6e6e6" stroke-width="1.700"/><rect x="80.500" y="6" width="13" height="12.500" fill="#fafafa" stroke="#2a2a2a" stroke-width=".8"/></svg>
<svg style="left:796.0px;top:75.2px" width="8" height="4.5" viewBox="0 0 8 4.5"><path d="M0 0H8L4.0 4.5Z" fill="#f2f2f2"/></svg>
<svg style="left:596px;top:90px" width="130" height="50" viewBox="0 0 130 50"><path d="M7.7 5.299999999999997H17.799999999999955L13.9 9.499999999999996H3.7999999999999545Z" fill="#f6f6f6" stroke="#1a1a1a" stroke-width=".9"/><path d="M14.799999999999955 9.299999999999997q3 0 3 3q0 1.500-1 2.500v2h-3.600v-2q-1-1-1-2.500q0-3 2.600-3Z" fill="#e6e8ee" stroke="#556" stroke-width=".4"/><path d="M32.1 9.499999999999996H42.200000000000045L38.3 13.699999999999996H28.200000000000045Z" fill="#f6f6f6" stroke="#1a1a1a" stroke-width=".9"/><path d="M32.1 6.399999999999997H42.200000000000045L38.3 10.599999999999998H28.200000000000045Z" fill="#f6f6f6" stroke="#1a1a1a" stroke-width=".9"/><path d="M32.1 3.299999999999997H42.200000000000045L38.3 7.499999999999997H28.200000000000045Z" fill="#f6f6f6" stroke="#1a1a1a" stroke-width=".9"/><path d="M42.200000000000045 14.299999999999997l-4.500 4.500M37.700000000000045 15.799999999999997v3h3" stroke="#cdd6e8" stroke-width="1.200" fill="none"/><path d="M56.5 4.299999999999997H66.60000000000002L62.7 8.499999999999996H52.60000000000002Z" fill="#f6f6f6" stroke="#1a1a1a" stroke-width=".9"/><g transform="translate(63.10000000000002,14.799999999999997)" stroke="#dfe6f6" stroke-width="1.300"><path d="M0 -3.800V3.800M-3.300 -1.900L3.300 1.900M3.300 -1.900L-3.300 1.900"/></g><path d="M80.9 4.299999999999997H91L87.1 8.499999999999996H77Z" fill="#f6f6f6" stroke="#1a1a1a" stroke-width=".9"/><rect x="85" y="12.799999999999997" width="6.500" height="5.500" fill="#d6d6d6" stroke="#555" stroke-width=".5"/><path d="M86.3 12.799999999999997v-1.500q0-2 2-2q2 0 2 2v1.500" fill="none" stroke="#d6d6d6" stroke-width="1.200"/><path d="M105.3 10.499999999999996H115.39999999999998L111.5 14.699999999999996H101.39999999999998Z" fill="#f6f6f6" stroke="#1a1a1a" stroke-width=".9"/><path d="M105.3 7.399999999999997H115.39999999999998L111.5 11.599999999999998H101.39999999999998Z" fill="#f6f6f6" stroke="#1a1a1a" stroke-width=".9"/><path d="M105.3 4.299999999999997H115.39999999999998L111.5 8.499999999999996H101.39999999999998Z" fill="#f6f6f6" stroke="#1a1a1a" stroke-width=".9"/><circle cx="109.39999999999998" cy="3.299999999999997" r="2" fill="#e8e8e8"/><path d="M7.7 33.8H17.799999999999955L13.9 38.0H3.7999999999999545Z" fill="#f6f6f6" stroke="#1a1a1a" stroke-width=".9"/><path d="M7.7 30.699999999999996H17.799999999999955L13.9 34.9H3.7999999999999545Z" fill="#f6f6f6" stroke="#1a1a1a" stroke-width=".9"/><path d="M7.7 27.599999999999994H17.799999999999955L13.9 31.799999999999994H3.7999999999999545Z" fill="#f6f6f6" stroke="#1a1a1a" stroke-width=".9"/><path d="M15.799999999999955 34.599999999999994q3.200 0 3.200 3.200q0 1.600-1.100 2.600v2.200h-4.200v-2.200q-1.100-1-1.100-2.600q0-3.200 3.200-3.200Z" fill="#f6e27a" stroke="#5a5030" stroke-width=".4"/><path d="M32.1 33.8H42.200000000000045L38.3 38.0H28.200000000000045Z" fill="#f6f6f6" stroke="#1a1a1a" stroke-width=".9"/><path d="M32.1 30.699999999999996H42.200000000000045L38.3 34.9H28.200000000000045Z" fill="#f6f6f6" stroke="#1a1a1a" stroke-width=".9"/><path d="M32.1 27.599999999999994H42.200000000000045L38.3 31.799999999999994H28.200000000000045Z" fill="#f6f6f6" stroke="#1a1a1a" stroke-width=".9"/><path d="M37.200000000000045 44.099999999999994l5-5M42.700000000000045 42.599999999999994v-4h-4" stroke="#dfe6f6" stroke-width="1.300" fill="none"/><path d="M56.5 33.8H66.60000000000002L62.7 38.0H52.60000000000002Z" fill="#f6f6f6" stroke="#1a1a1a" stroke-width=".9"/><path d="M56.5 30.699999999999996H66.60000000000002L62.7 34.9H52.60000000000002Z" fill="#f6f6f6" stroke="#1a1a1a" stroke-width=".9"/><path d="M56.5 27.599999999999994H66.60000000000002L62.7 31.799999999999994H52.60000000000002Z" fill="#f6f6f6" stroke="#1a1a1a" stroke-width=".9"/><g transform="translate(65.10000000000002,40.099999999999994)"><g stroke="#f0d23a" stroke-width="1.500"><path d="M0 -5V5M-5 0H5M-3.500 -3.500L3.500 3.500M3.500 -3.500L-3.500 3.500"/></g><circle r="2.800" fill="#f6dc50"/></g><path d="M80.9 28.599999999999994H91L87.1 32.8H77Z" fill="#f6f6f6" stroke="#1a1a1a" stroke-width=".9"/><rect x="84" y="38.599999999999994" width="7" height="5.500" fill="#efd25a" stroke="#54481c" stroke-width=".5"/><path d="M89.5 38.599999999999994v-1.500q0-2 2-2q2 0 2 2" fill="none" stroke="#efd25a" stroke-width="1.200"/><path d="M104.3 33.8H114.39999999999998L110.5 38.0H100.39999999999998Z" fill="#f6f6f6" stroke="#1a1a1a" stroke-width=".9"/><path d="M104.3 30.699999999999996H114.39999999999998L110.5 34.9H100.39999999999998Z" fill="#f6f6f6" stroke="#1a1a1a" stroke-width=".9"/><path d="M104.3 27.599999999999994H114.39999999999998L110.5 31.799999999999994H100.39999999999998Z" fill="#f6f6f6" stroke="#1a1a1a" stroke-width=".9"/><path d="M110.39999999999998 42.099999999999994l3.500-3.500 3.500 3.500-3.500 3.500Z" fill="#d8632a"/></svg>
<svg style="left:820px;top:66px" width="36" height="34" viewBox="0 0 36 34"><path d="M15.500 2.500H26.500L31.500 7.500V25H15.500Z" fill="#e6ecf8" stroke="#2a2a3a" stroke-width="1"/><path d="M18 6h7M18 9h10M18 12h10" stroke="#a8bde2" stroke-width="1.200"/><rect x="4.500" y="11.500" width="19" height="14" rx="1" fill="#f2f4f8" stroke="#1e1e1e" stroke-width="1.300"/><rect x="2.500" y="23" width="4" height="4" fill="#4a4a4a" stroke="#7fa0d8" stroke-width=".9"/><circle cx="22.800" cy="25.600" r="6.600" fill="#eef0f4" stroke="#1e1e1e" stroke-width="1.300"/><path d="M22.800 21.600v4.300h3.300" stroke="#8aa4cc" stroke-width="1.200" fill="none"/></svg>
<svg style="left:866px;top:68px" width="24" height="66" viewBox="0 0 24 66"><rect x="3.500" y="3.500" width="10" height="8" fill="#e8ebf2" stroke="#333" stroke-width=".8"/><circle cx="14" cy="12.500" r="3.800" fill="#f0f0f0" stroke="#333" stroke-width=".8"/><rect x="1.500" y="10" width="3" height="3" fill="#444" stroke="#86a4d8" stroke-width=".7"/><g transform="translate(0,2.500)"><rect x="4" y="27" width="8" height="7" fill="#c5cce0" stroke="#667" stroke-width=".5"/><circle cx="12" cy="36" r="3.500" fill="#e8e8ee" stroke="#667" stroke-width=".5"/><rect x="1.500" y="33.500" width="3" height="3" fill="#b6c2de"/><path d="M15 23l1 2.200 2.400.3-1.700 1.700.4 2.400-2.100-1.100-2.100 1.100.4-2.400-1.700-1.700 2.400-.3Z" fill="#f2d030"/></g><path d="M5 54l4 7 7.500-8.500" fill="none" stroke="#f2f2f2" stroke-width="2.600"/><path d="M5 51h6l-1.500 4" fill="none" stroke="#f2f2f2" stroke-width="1.600"/><path d="M10.500 58.500L16 52" stroke="#e4b53a" stroke-width="1.800"/></svg>
<div style="left:920px;top:67.3px;width:30px;height:30px;background:conic-gradient(#f6ea78 0deg,#f6c45a 45deg,#ee8a32 90deg,#d4201e 90deg,#c22a5e 135deg,#7c3cc6 180deg,#3c4ccf 225deg,#2a5ac8 270deg,#3fc050 270deg,#a6de62 315deg,#f6ea78 360deg);border-radius:50%;border:1.8px solid #181824;box-sizing:border-box;"></div>
<div style="left:921.3px;top:68.6px;width:27.4px;height:27.4px;background:radial-gradient(circle at 50% 42%,rgba(255,255,255,.5),rgba(255,255,255,.08) 50%,rgba(0,0,0,.15) 100%);border-radius:50%;"></div>
<svg style="left:990px;top:68px" width="16" height="14" viewBox="0 0 16 14"><rect x="2" y="2" width="4.500" height="4" fill="#e8e8e8"/><rect x="2" y="8" width="4.500" height="4" fill="#e8e8e8"/><rect x="8" y="2" width="3" height="3" fill="#d0d0d0"/><path d="M8 5l5.500 5-2.300.3 1.200 2.500-1.300.6-1.200-2.500-1.900 1.500Z" fill="#f4f4f4" stroke="#333" stroke-width=".5"/></svg>
<svg style="left:1048px;top:67px" width="22" height="30" viewBox="0 0 22 30"><rect x="1" y="1" width="20" height="28" rx="2" fill="#f0f0f0" stroke="#2a2a2a" stroke-width="1.200"/><rect x="4" y="4" width="14" height="6" fill="#8a8a8a" stroke="#555" stroke-width=".6"/><rect x="4.0" y="13" width="3.600" height="2.800" fill="#4a4a4a"/><rect x="9.2" y="13" width="3.600" height="2.800" fill="#4a4a4a"/><rect x="14.4" y="13" width="3.600" height="2.800" fill="#4a4a4a"/><rect x="4.0" y="17" width="3.600" height="2.800" fill="#4a4a4a"/><rect x="9.2" y="17" width="3.600" height="2.800" fill="#4a4a4a"/><rect x="14.4" y="17" width="3.600" height="2.800" fill="#4a4a4a"/><rect x="4.0" y="21" width="3.600" height="2.800" fill="#4a4a4a"/><rect x="9.2" y="21" width="3.600" height="2.800" fill="#4a4a4a"/><rect x="14.4" y="21" width="3.600" height="2.800" fill="#4a4a4a"/><rect x="4.0" y="25" width="3.600" height="2.800" fill="#4a4a4a"/><rect x="9.2" y="25" width="3.600" height="2.800" fill="#4a4a4a"/><rect x="14.4" y="25" width="3.600" height="2.800" fill="#4a4a4a"/></svg>
<svg style="left:1108px;top:66px" width="26" height="31" viewBox="0 0 26 31"><rect x="1" y="3" width="15" height="21" rx="1.500" fill="#cfcfcf" stroke="#2c2c2c" stroke-width="1.200"/><path d="M5 3.500Q5 .8 8.500 .8Q12 .8 12 3.500V5H5Z" fill="#e8e8e8" stroke="#2c2c2c" stroke-width=".9"/><path d="M8.500 8.500H19L24.500 14V29.500H8.500Z" fill="#f6f6f6" stroke="#2c2c2c" stroke-width="1.200"/><path d="M19 8.500V14H24.500" fill="#d8d8d8" stroke="#2c2c2c" stroke-width=".9"/></svg>
<svg style="left:1168px;top:72px" width="28" height="21" viewBox="0 0 28 21"><path d="M1 1H11.500V7.500H27V20H1Z" fill="#f2f2f2" stroke="#2a2a2a" stroke-width="1.100"/><path d="M1.500 16H26.500V19.500H1.500Z" fill="#dcdcdc"/></svg>
<span class="t" style="left:27.50px;top:22.30px;font-size:13px;line-height:16px;color:#fff;transform:scaleX(0.8893);-webkit-text-stroke:0.3px #fff;">Datei</span>
<span class="t" style="left:73.75px;top:22.30px;font-size:13px;line-height:16px;color:#fff;transform:scaleX(0.8745);-webkit-text-stroke:0.3px #fff;">Bearbeiten</span>
<span class="t" style="left:148.00px;top:22.30px;font-size:13px;line-height:16px;color:#fff;transform:scaleX(0.9146);-webkit-text-stroke:0.3px #fff;">Ansicht</span>
<span class="t" style="left:206.00px;top:22.30px;font-size:13px;line-height:16px;color:#fff;transform:scaleX(0.8962);-webkit-text-stroke:0.3px #fff;">Einfügen</span>
<span class="t" style="left:271.75px;top:22.30px;font-size:13px;line-height:16px;color:#fff;transform:scaleX(0.9169);-webkit-text-stroke:0.3px #fff;">Format</span>
<span class="t" style="left:328.25px;top:22.30px;font-size:13px;line-height:16px;color:#fff;transform:scaleX(0.8278);-webkit-text-stroke:0.3px #fff;">Extras</span>
<span class="t" style="left:377.50px;top:22.30px;font-size:13px;line-height:16px;color:#fff;transform:scaleX(0.8788);-webkit-text-stroke:0.3px #fff;">Zeichnen</span>
<span class="t" style="left:443.75px;top:22.30px;font-size:13px;line-height:16px;color:#fff;transform:scaleX(0.8924);-webkit-text-stroke:0.3px #fff;">Bemaßung</span>
<span class="t" style="left:520.00px;top:22.30px;font-size:13px;line-height:16px;color:#fff;transform:scaleX(0.9124);-webkit-text-stroke:0.3px #fff;">Ändern</span>
<span class="t" style="left:578.00px;top:22.30px;font-size:13px;line-height:16px;color:#fff;transform:scaleX(0.8749);-webkit-text-stroke:0.3px #fff;">Parametrisch</span>
<span class="t" style="left:664.50px;top:22.30px;font-size:13px;line-height:16px;color:#fff;transform:scaleX(0.8621);-webkit-text-stroke:0.3px #fff;">Fenster</span>
<span class="t" style="left:721.50px;top:22.30px;font-size:13px;line-height:16px;color:#fff;transform:scaleX(0.9033);-webkit-text-stroke:0.3px #fff;">Hilfe</span>
<span class="t" style="left:764.50px;top:22.30px;font-size:13px;line-height:16px;color:#fff;transform:scaleX(0.8463);-webkit-text-stroke:0.3px #fff;">Express</span>
<span class="t" style="left:3.50px;top:44.90px;font-size:13px;line-height:16px;color:#fff;transform:scaleX(0.8919);-webkit-text-stroke:0.3px #fff;">Start</span>
<span class="t" style="left:48.00px;top:44.90px;font-size:13px;line-height:16px;color:#fff;transform:scaleX(0.9059);-webkit-text-stroke:0.3px #fff;">Einfügen</span>
<span class="t" style="left:115.00px;top:44.90px;font-size:13px;line-height:16px;color:#fff;transform:scaleX(0.8840);-webkit-text-stroke:0.3px #fff;">Beschriften</span>
<span class="t" style="left:193.00px;top:44.90px;font-size:13px;line-height:16px;color:#fff;transform:scaleX(0.8854);-webkit-text-stroke:0.3px #fff;">Parametrisch</span>
<span class="t" style="left:281.00px;top:44.90px;font-size:13px;line-height:16px;color:#fff;transform:scaleX(0.9146);-webkit-text-stroke:0.3px #fff;">Ansicht</span>
<span class="t" style="left:340.00px;top:44.90px;font-size:13px;line-height:16px;color:#fff;transform:scaleX(0.9108);-webkit-text-stroke:0.3px #fff;">Verwalten</span>
<span class="t" style="left:412.00px;top:44.90px;font-size:13px;line-height:16px;color:#fff;transform:scaleX(0.9205);-webkit-text-stroke:0.3px #fff;">Ausgabe</span>
<span class="t" style="left:479.50px;top:44.90px;font-size:13px;line-height:16px;color:#fff;transform:scaleX(0.9529);-webkit-text-stroke:0.3px #fff;">Add-ins</span>
<span class="t" style="left:541.75px;top:44.90px;font-size:13px;line-height:16px;color:#fff;transform:scaleX(0.9300);-webkit-text-stroke:0.3px #fff;">A360</span>
<span class="t" style="left:590.50px;top:44.90px;font-size:13px;line-height:16px;color:#fff;transform:scaleX(0.9361);-webkit-text-stroke:0.3px #fff;">Verfügbare Apps</span>
<span class="t" style="left:701.25px;top:44.90px;font-size:13px;line-height:16px;color:#fff;transform:scaleX(0.9003);-webkit-text-stroke:0.3px #fff;">Performance</span>
<span class="t" style="left:788.25px;top:44.90px;font-size:13px;line-height:16px;color:#fff;transform:scaleX(0.8954);-webkit-text-stroke:0.3px #fff;">Express Tools</span>
<span class="t" style="left:880.50px;top:44.90px;font-size:13px;line-height:16px;color:#fff;transform:scaleX(0.9284);-webkit-text-stroke:0.3px #fff;">Layout</span>
<span class="t" style="left:261.60px;top:0.80px;font-size:13px;line-height:16px;color:#fff;transform:scaleX(0.8919);-webkit-text-stroke:0.3px #fff;">Zeichnen und Beschriftu...</span>
<span class="t" style="left:537.00px;top:-0.20px;font-size:13px;line-height:16px;color:#0a1a3c;transform:scaleX(0.9171);-webkit-text-stroke:0.3px #0a1a3c;">Zeichnung1.dwg</span>
<span class="t" style="left:727.52px;top:0.82px;font-size:12.5px;line-height:15px;color:#cfcfcf;transform:scaleX(0.8480);-webkit-text-stroke:0.3px #cfcfcf;font-style:italic;">Stichwort oder Frage eingeben</span>
<span class="t" style="left:955.00px;top:-0.20px;font-size:13px;line-height:16px;color:#fff;transform:scaleX(0.9181);-webkit-text-stroke:0.3px #fff;">Anmelden</span>
<span class="t" style="left:1.50px;top:105.20px;font-size:13px;line-height:16px;color:#fff;transform:scaleX(0.8464);-webkit-text-stroke:0.3px #fff;">Linie</span>
<span class="t" style="left:35.60px;top:105.20px;font-size:13px;line-height:16px;color:#fff;transform:scaleX(0.8839);-webkit-text-stroke:0.3px #fff;">Polylinie</span>
<span class="t" style="left:92.30px;top:105.20px;font-size:13px;line-height:16px;color:#fff;transform:scaleX(0.8405);-webkit-text-stroke:0.3px #fff;">Kreis</span>
<span class="t" style="left:139.00px;top:105.20px;font-size:13px;line-height:16px;color:#fff;transform:scaleX(0.9044);-webkit-text-stroke:0.3px #fff;">Bogen</span>
<span class="t" style="left:377.30px;top:105.20px;font-size:13px;line-height:16px;color:#fff;transform:scaleX(0.8891);-webkit-text-stroke:0.3px #fff;">Text</span>
<span class="t" style="left:412.75px;top:105.20px;font-size:13px;line-height:16px;color:#fff;transform:scaleX(0.8908);-webkit-text-stroke:0.3px #fff;">Bemaßung</span>
<span class="t" style="left:539.00px;top:105.80px;font-size:13px;line-height:16px;color:#fff;transform:scaleX(0.8573);-webkit-text-stroke:0.3px #fff;">Layer-</span>
<span class="t" style="left:518.50px;top:122.10px;font-size:13px;line-height:16px;color:#fff;transform:scaleX(0.8828);-webkit-text-stroke:0.3px #fff;">Eigenschaften</span>
<span class="t" style="left:814.60px;top:105.20px;font-size:13px;line-height:16px;color:#fff;transform:scaleX(0.8923);-webkit-text-stroke:0.3px #fff;">Einfügen</span>
<span class="t" style="left:913.00px;top:102.80px;font-size:13px;line-height:16px;color:#fff;transform:scaleX(0.8420);-webkit-text-stroke:0.3px #fff;">Eigens...</span>
<span class="t" style="left:973.40px;top:87.05px;font-size:13px;line-height:16px;color:#fff;transform:scaleX(0.9161);-webkit-text-stroke:0.3px #fff;">Gruppen</span>
<span class="t" style="left:1032.20px;top:102.80px;font-size:13px;line-height:16px;color:#fff;transform:scaleX(0.9123);-webkit-text-stroke:0.3px #fff;">Dienstpr...</span>
<span class="t" style="left:1098.40px;top:102.80px;font-size:13px;line-height:16px;color:#fff;transform:scaleX(0.8841);-webkit-text-stroke:0.3px #fff;">Zwisch...</span>
<span class="t" style="left:1163.00px;top:102.80px;font-size:13px;line-height:16px;color:#fff;transform:scaleX(0.9146);-webkit-text-stroke:0.3px #fff;">Ansicht</span>
<span class="t" style="left:79.70px;top:143.30px;font-size:13px;line-height:16px;color:#fff;transform:scaleX(0.8657);-webkit-text-stroke:0.3px #fff;">Zeichnen</span>
<span class="t" style="left:269.60px;top:143.30px;font-size:13px;line-height:16px;color:#fff;transform:scaleX(0.9160);-webkit-text-stroke:0.3px #fff;">Ändern</span>
<span class="t" style="left:398.40px;top:143.30px;font-size:13px;line-height:16px;color:#fff;transform:scaleX(0.8995);-webkit-text-stroke:0.3px #fff;">Beschriftung</span>
<span class="t" style="left:639.30px;top:143.30px;font-size:13px;line-height:16px;color:#fff;transform:scaleX(0.8515);-webkit-text-stroke:0.3px #fff;">Layer</span>
<span class="t" style="left:835.25px;top:143.30px;font-size:13px;line-height:16px;color:#fff;transform:scaleX(0.8664);-webkit-text-stroke:0.3px #fff;">Block</span>
<span class="t" style="left:696.50px;top:69.30px;font-size:13px;line-height:16px;color:#fff;transform:scaleX(0.9538);-webkit-text-stroke:0.3px #fff;">0</span>
<span class="t" style="left:375.12px;top:62.80px;font-size:36.5px;line-height:44px;color:#fff;transform:scaleX(1.0940);">A</span>
<span class="t" style="left:20.50px;top:168.30px;font-size:13px;line-height:16px;color:#c4c4c4;transform:scaleX(0.9101);-webkit-text-stroke:0.3px #c4c4c4;">Start</span>
<span class="t" style="left:145.00px;top:167.80px;font-size:13px;line-height:16px;color:#fff;transform:scaleX(0.9178);-webkit-text-stroke:0.3px #fff;">Zeichnung1*</span>
<span class="t" style="left:12.00px;top:696.80px;font-size:13px;line-height:16px;color:#cfcfcf;transform:scaleX(0.9596);-webkit-text-stroke:0.3px #cfcfcf;">Modell</span>
<span class="t" style="left:73.03px;top:697.32px;font-size:12.5px;line-height:15px;color:#fff;transform:scaleX(0.9272);-webkit-text-stroke:0.3px #fff;font-weight:bold;">Layout1</span>
<span class="t" style="left:141.25px;top:696.80px;font-size:13px;line-height:16px;color:#cfcfcf;transform:scaleX(0.9078);-webkit-text-stroke:0.3px #cfcfcf;">Layout2</span>
<span class="t" style="left:790.55px;top:701.84px;font-size:12px;line-height:14px;color:#fff;transform:scaleX(0.8939);-webkit-text-stroke:0.3px #fff;font-weight:bold;">PAPIER</span>
<span class="t" style="left:339.25px;top:668.56px;font-size:18px;line-height:22px;color:#8a8a8a;transform:scaleX(0.9936);-webkit-text-stroke:0.12px #8a8a8a;font-family:'Liberation Mono', monospace;font-style:italic;">Befehl eingeben</span>
<span class="t" style="left:558.88px;top:595.34px;font-size:5.5px;line-height:7px;color:#000;transform:scaleX(0.8613);font-weight:bold;">Datum</span>
<span class="t" style="left:604.88px;top:595.34px;font-size:5.5px;line-height:7px;color:#000;transform:scaleX(0.8843);font-weight:bold;">Name</span>
<span class="t" style="left:504.88px;top:606.64px;font-size:5.5px;line-height:7px;color:#000;transform:scaleX(0.9231);font-weight:bold;">gezeichnet</span>
<span class="t" style="left:504.88px;top:615.64px;font-size:5.5px;line-height:7px;color:#000;transform:scaleX(0.8574);font-weight:bold;">geprüft</span>
<span class="t" style="left:735.88px;top:638.14px;font-size:5.5px;line-height:7px;color:#000;transform:scaleX(0.8791);font-weight:bold;">Zeichnungs-</span>
<span class="t" style="left:735.88px;top:643.94px;font-size:5.5px;line-height:7px;color:#000;transform:scaleX(0.8571);font-weight:bold;">Nr</span>
<svg style="left:56px;top:694px" width="14" height="20" viewBox="0 0 14 20"><path d="M1.500 1.500V15.500L5 12.500 7.500 18 9.800 17 7.300 11.600H12Z" fill="#fff" stroke="#111" stroke-width="1"/></svg>
</div></body></html>
